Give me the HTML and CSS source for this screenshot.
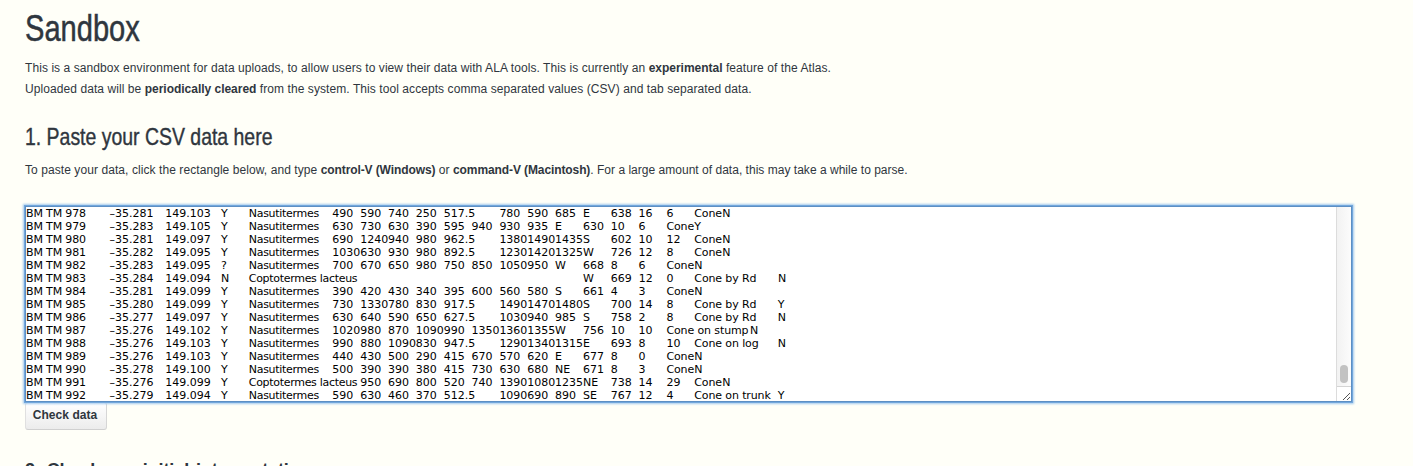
FILE: index.html
```
<!DOCTYPE html>
<html lang="en">
<head>
<meta charset="utf-8">
<title>Sandbox</title>
<link rel="stylesheet" href="styles.css">
</head>
<body>
<main class="page">
  <h1 class="title">Sandbox</h1>
  <p class="intro">This is a sandbox environment for data uploads, to allow users to view their data with ALA tools. This is currently an <strong>experimental</strong> feature of the Atlas.<br>Uploaded data will be <strong>periodically cleared</strong> from the system. This tool accepts comma separated values (CSV) and tab separated data.</p>
  <h2 class="step">1. Paste your CSV data here</h2>
  <p class="hint">To paste your data, click the rectangle below, and type <strong>control-V (Windows)</strong> or <strong>command-V (Macintosh)</strong><span class="note">. For a large amount of data, this may take a while to parse.</span></p>
  <div class="paste">
    <div class="rows" id="rows"></div>
    <div class="scroll">
      <div class="track"><div class="thumb"></div></div>
      <svg class="grip" viewBox="0 0 14 14" width="14" height="14"><path d="M6 13L13 6M10 13L13 10" stroke="#555" stroke-width="1" fill="none"/></svg>
    </div>
  </div>
  <button class="check" type="button">Check data</button>
  <h2 class="next">2. Check our initial interpretation</h2>
</main>
<script src="rows.js"></script>
</body>
</html>
```
FILE: styles.css
```
* { box-sizing: border-box; }
body {
  margin: 0;
  height: 466px;
  overflow: hidden;
  background: #fffff8;
  color: #2f363e;
  font-family: "Liberation Sans", Arial, sans-serif;
}
.page { padding: 9px 60px 0 25px; }
h1, h2, p { margin: 0; white-space: nowrap; }
.title {
  font-size: 36px;
  line-height: 40px;
  font-weight: 400;
  -webkit-text-stroke: 0.5px;
  transform: scaleX(0.808);
  transform-origin: 0 0;
}
.intro, .hint {
  font-size: 12px;
  line-height: 21px;
  letter-spacing: 0.075px;
}
.intro { padding-top: 9px; }
.intro strong { letter-spacing: -0.02px; }
.step {
  padding-top: 23px;
  font-size: 24px;
  line-height: 28px;
  font-weight: 400;
  -webkit-text-stroke: 0.4px;
  transform: scaleX(0.81);
  transform-origin: 0 0;
}
.hint { padding-top: 9px; }
.hint strong { letter-spacing: -0.1px; }
.note { letter-spacing: 0.02px; }
.paste {
  display: flex;
  justify-content: space-between;
  width: 1327px;
  height: 196px;
  margin-top: 25px;
  border: 1px solid #5c8fc4;
  background: #fff;
  box-shadow: 0 0 0 1px #72a7dc, 0 0 2px 2px #a5cbee;
  position: relative;
}
.rows {
  font: 11px/13px "DejaVu Sans", sans-serif;
  color: #000;
}
.row { display: flex; height: 13px; }
.cell { flex: none; white-space: pre; }
.id { letter-spacing: -0.15px; }
.word { letter-spacing: -0.3px; }
.mound { letter-spacing: -0.12px; }
.scroll {
  display: flex;
  flex-direction: column;
  width: 15px;
  border-left: 1px solid #dcdcdc;
}
.track {
  flex: 1;
  display: flex;
  flex-direction: column;
  justify-content: flex-end;
  padding: 0 3px 3px;
  background: linear-gradient(90deg, #f2f2f2, #fcfcfc);
  border-bottom: 1px solid #d4d4d4;
}
.thumb { width: 8px; height: 18px; border-radius: 4px; background: #c2c2c2; }
.grip { display: block; }
.check {
  display: block;
  width: 82px;
  height: 28px;
  padding: 0 2px 3px 0;
  border: 1px solid #ddd;
  border-color: #e4e4e4 #d6d6d6 #d0d0d0 #e0e0e0;
  border-radius: 3px;
  background: linear-gradient(#fff, #ececec);
  color: #2f363e;
  font: bold 12px/14px "Liberation Sans", Arial, sans-serif;
  letter-spacing: 0.06px;
}
.next {
  padding-top: 30px;
  font-size: 18px;
  line-height: 20px;
  font-weight: 700;
  word-spacing: 2px;
  letter-spacing: -0.1px;
}
```
FILE: rows.js
```
// Tab-separated cells; "text:n" spans n tab stops.
const STOP = 27.85;
const data = [
  "978:3|-35.281:2|149.103:2|Y|Nasutitermes:3|490|590|740|250|517.5:2|780|590|685|E|638|16|6|Cone|N",
  "979:3|-35.283:2|149.105:2|Y|Nasutitermes:3|630|730|630|390|595|940|930|935|E|630|10|6|Cone|Y",
  "980:3|-35.281:2|149.097:2|Y|Nasutitermes:3|690|1240|940|980|962.5:2|1380|1490|1435|S|602|10|12|Cone|N",
  "981:3|-35.282:2|149.095:2|Y|Nasutitermes:3|1030|630|930|980|892.5:2|1230|1420|1325|W|726|12|8|Cone|N",
  "982:3|-35.283:2|149.095:2|?|Nasutitermes:3|700|670|650|980|750|850|1050|950|W|668|8|6|Cone|N",
  "983:3|-35.284:2|149.094:2|N|Coptotermes lacteus:12|W|669|12|0|Cone by Rd:3|N",
  "984:3|-35.281:2|149.099:2|Y|Nasutitermes:3|390|420|430|340|395|600|560|580|S|661|4|3|Cone|N",
  "985:3|-35.280:2|149.099:2|Y|Nasutitermes:3|730|1330|780|830|917.5:2|1490|1470|1480|S|700|14|8|Cone by Rd:3|Y",
  "986:3|-35.277:2|149.097:2|Y|Nasutitermes:3|630|640|590|650|627.5:2|1030|940|985|S|758|2|8|Cone by Rd:3|N",
  "987:3|-35.276:2|149.102:2|Y|Nasutitermes:3|1020|980|870|1090|990|1350|1360|1355|W|756|10|10|Cone on stump:3|N",
  "988:3|-35.276:2|149.103:2|Y|Nasutitermes:3|990|880|1090|830|947.5:2|1290|1340|1315|E|693|8|10|Cone on log:3|N",
  "989:3|-35.276:2|149.103:2|Y|Nasutitermes:3|440|430|500|290|415|670|570|620|E|677|8|0|Cone|N",
  "990:3|-35.278:2|149.100:2|Y|Nasutitermes:3|500|390|390|380|415|730|630|680|NE|671|8|3|Cone|N",
  "991:3|-35.276:2|149.099:2|Y|Coptotermes lacteus:4|950|690|800|520|740|1390|1080|1235|NE|738|14|29|Cone|N",
  "992:3|-35.279:2|149.094:2|Y|Nasutitermes:3|590|630|460|370|512.5:2|1090|690|890|SE|767|12|4|Cone on trunk:3|Y"
];
document.getElementById("rows").innerHTML = data.map(line =>
  '<div class="row">' + line.split("|").map((cell, i) => {
    const [text, span = 1] = cell.split(":");
    const cls = i === 0 ? " id" : text.startsWith("Cone") ? " mound" : /[a-z]/.test(text) ? " word" : "";
    const label = i === 0 ? "BM TM " + text : text.replace("-", "\u2013");
    return `<span class="cell${cls}" style="width:${span * STOP}px">${label}</span>`;
  }).join("") + "</div>").join("");
```
